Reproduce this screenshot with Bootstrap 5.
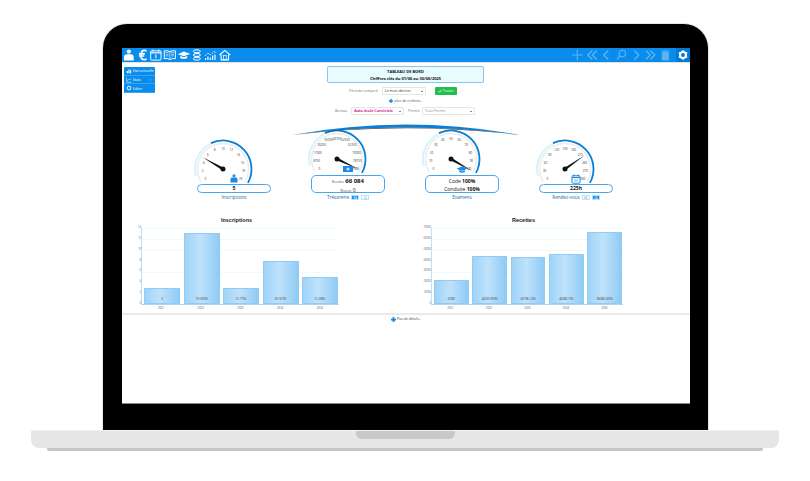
<!DOCTYPE html>
<html lang="fr">
<head>
<meta charset="UTF-8" />
<meta name="viewport" content="width=device-width, initial-scale=1" />
<title>Tableau de bord</title>
<link href="https://cdn.jsdelivr.net/npm/bootstrap@5.3.0/dist/css/bootstrap.min.css" rel="stylesheet" />
<style>
body { background: #fff; font-family: "Open Sans", "Liberation Sans", sans-serif; overflow: hidden; }
.laptop { width: 810px; height: 481px; padding-top: 24px; }
.bezel { width: 605px; height: 406px; margin-left: 103px; background: #000; border-radius: 24px 24px 0 0; padding: 24px 18px 26px 19px; box-shadow: 0 0 0 1px #e6e6e6; }
.screen { height: 356px; background: #fff; position: relative; border-bottom: 1px solid #888; }
.base { width: 748px; height: 18px; margin-left: 31px; background: #e6e6e6; border-top: 1px solid #f4f4f4; border-radius: 0 0 8px 8px; }
.notch { width: 99px; height: 8px; background: #c8c8c8; border-radius: 0 0 6px 6px; }
.foot { width: 716px; height: 3px; margin-left: 47px; background: #c6c6c6; border-radius: 0 0 2px 2px; }
.topbar { height: 14px; background: #0a8ced; box-shadow: 0 1px 0 #eadfd5; }
.topbar svg { display: block; width: 13.7px; height: 12px; }
.tools svg { width: 14.6px; }
.tool-gear { width: 14px; height: 14px; background: #0579d2; margin-left: 3.7px; }
.side-menu { position: absolute; left: 2px; top: 19px; width: 31px; background: #0a8ced; border-radius: 1px; }
.side-menu div { height: 8.7px; font-size: 3.4px; color: #fff; padding-left: 2px; border-bottom: .5px solid #3aa3f0; gap: 1px; }
.side-menu svg { width: 6px; height: 6px; }
.title-box { width: 157px; height: 17px; margin: 4px 0 0 205px; background: #e8fbff; border: 1px solid #8cc4ec; border-radius: 2px; font-size: 4px; font-weight: 700; line-height: 7px; color: #111; padding-top: 1px; }
.filters { font-size: 3.6px; color: #777; height: 8px; }
.fake-select { height: 8.500px; border: .5px solid #e6e6e6; border-radius: 1px; padding: 0 2px; color: #333; background: #fff; }
.fake-select i { width: 0; height: 0; border-left: 1px solid transparent; border-right: 1px solid transparent; border-top: 1.5px solid #111; }
.btn-find { height: 8px; width: 22px; background: #1fbf4b; color: #fff; font-size: 3px; border-radius: 1px; margin-left: 9px; gap: 1px; }
.more { font-size: 3.6px; color: #555; height: 8px; margin: 2px 0; gap: 1px; }
.swoosh { position: absolute; left: 169px; top: 74px; width: 230px; height: 14px; }
.gauges { height: 76px; margin-top: 11px; width: 456px; margin-left: 75px; }
.gauge { width: 114px; }
.gauge svg { display: block; width: 74px; height: 50px; overflow: visible; }
.gauge svg text { font-size: 3px; fill: #333; text-anchor: middle; font-family: "Open Sans", sans-serif; }
.gauge-box { width: 74px; border: 1px solid #4aa6ee; border-radius: 5px; background: #fff; font-size: 5px; text-align: center; color: #111; position: relative; }
.gauge-box.small { height: 9px; line-height: 7px; font-weight: 700; border-radius: 4.500px; }
.gauge-box.big { height: 18px; line-height: 8px; padding-top: .5px; }
.gauge-box small { font-size: 3px; color: #444; }
.gauge-box .amount { font-size: 6px; }
.gauge-label { font-size: 4.600px; color: #1a5fa0; height: 9px; line-height: 7px; gap: 2px; width: 74px; }
.toggle { font-size: 2.600px; line-height: 4px; height: 5px; width: 8px; text-align: center; border: .5px solid #bfe0fa; color: #7ab; }
.toggle.on { background: #0a8ced; color: #fff; }
.charts { margin-top: 17px; height: 96px; }
.chart { position: absolute; top: 0; }
.chart-title { font-size: 5.500px; font-weight: 700; font-family: "Liberation Sans", sans-serif; text-align: center; color: #222; height: 11px; margin-top: -2px; line-height: 6px; padding-left: 12px; }
.plot { height: 77px; border-left: 1px solid #bfe0fa; border-bottom: 1px solid #a9d6f7; margin-left: 19px; padding: 0 1px 0 2px; gap: 3.5px; background: repeating-linear-gradient(to bottom, #eefbfb 0, #eefbfb .5px, transparent .5px, transparent 11px); position: relative; }
.bar { flex: 1; border: 1px solid #8fcbf5; background: linear-gradient(to right, #9fd3f8, #bfe2fa 45%, #8fcbf5); font-size: 2.800px; color: #333; text-align: center; padding-bottom: 2px; }
.ticks { position: absolute; left: -19px; top: -2px; bottom: -2px; width: 18px; font-size: 2.600px; color: #666; text-align: right; }
.years { margin-left: 19px; padding: 1px 1px 0 2px; gap: 3.5px; font-size: 2.800px; color: #555; }
.years span { flex: 1; text-align: center; }
.sep { height: 2px; background: #e9e9e9; position: absolute; left: 0; right: 0; top: 265px; }
.details { position: absolute; left: 0; right: 0; top: 269px; font-size: 3.300px; color: #444; gap: 1px; }
</style>
</head>
<body>
<div class="laptop">
  <div class="bezel">
    <div class="screen">
      <div class="topbar d-flex align-items-center">
        <svg viewBox="0 0 14 12"><circle cx="7" cy="2.5" r="2.2" fill="#fff"/><path d="M2 11.500V8.500q0-3 2.800-3.200h4.400q2.800.2 2.800 3.200v3z" fill="#fff"/></svg>
        <svg viewBox="0 0 14 12"><path d="M10.800 2.200Q9.800 1.200 8.500 1.200 5.500 1.200 5 6t3.500 4.800q1.300 0 2.300-1M3 4.900h6M3 7h5.400" fill="none" stroke="#fff" stroke-width="1.700"/></svg>
        <svg viewBox="0 0 14 12"><rect x="1.700" y="1.800" width="10.600" height="9.400" rx=".8" fill="none" stroke="#fff"/><path d="M1.700 3.800h10.600" stroke="#fff" stroke-width="1.200"/><path d="M4 .5v2M10 .5v2" stroke="#fff"/><path d="M7 5.400v4" stroke="#fff"/></svg>
        <svg viewBox="0 0 14 12"><path d="M7 2.600Q4.500 1 1.300 1.800v8Q4.500 9 7 10.600 9.500 9 12.700 9.800v-8Q9.500 1 7 2.600z" fill="none" stroke="#fff"/><path d="M7 2.600v8M2.700 3.500h3M2.700 5.200h3M2.700 6.900h3M8.300 3.500h3M8.300 5.200h3M8.300 6.900h3" stroke="#fff" stroke-width=".6"/></svg>
        <svg viewBox="0 0 14 12"><path d="M7 2.500 13.500 4.800 7 7.300.8 5.200z" fill="#fff"/><path d="M3.300 7v2Q7 10.800 10.500 9V7L7 8.300z" fill="#fff"/></svg>
        <svg viewBox="0 0 14 12"><ellipse cx="7" cy="2.200" rx="3.600" ry="1.500" fill="none" stroke="#fff"/><ellipse cx="7" cy="6" rx="3.600" ry="1.500" fill="none" stroke="#fff"/><ellipse cx="7" cy="9.800" rx="3.600" ry="1.500" fill="none" stroke="#fff"/><path d="M4.500 4.100h5M4.500 7.900h5" stroke="#fff"/></svg>
        <svg viewBox="0 0 14 12"><path d="M1 11V9h1.200v2zM3.400 11V7.500h1.200V11zM5.800 11V8.500H7V11zM8.200 11V6.500h1.200V11zM10.600 11V5.500h1.200V11z" fill="#fff"/><path d="M1 7 4 4l2.500 2L10 2.500l2.500 1" fill="none" stroke="#fff" stroke-width=".8" stroke-dasharray="1.500 .5"/></svg>
        <svg viewBox="0 0 14 12"><path d="M1.500 6 7 1.300 12.500 6M3.200 5.500V11h7.600V5.500" fill="none" stroke="#fff" stroke-width="1.100"/><rect x="5.600" y="6.500" width="2.800" height="4.500" fill="none" stroke="#fff" stroke-width=".7"/></svg>
        <div class="tools ms-auto d-flex align-items-center">
          <svg viewBox="0 0 14 12"><path d="M7 .5v11M1.500 6h11" stroke="#5db4f3" stroke-width="1.100"/></svg>
          <svg viewBox="0 0 14 12"><path d="M7 1.500 2.500 6 7 10.500M11.500 1.500 7 6l4.500 4.500" fill="none" stroke="#5db4f3" stroke-width="1.300"/></svg>
          <svg viewBox="0 0 14 12"><path d="M9 1.500 4.500 6 9 10.500" fill="none" stroke="#5db4f3" stroke-width="1.300"/></svg>
          <svg viewBox="0 0 14 12"><circle cx="8" cy="4.500" r="3.200" fill="none" stroke="#5db4f3" stroke-width="1.100"/><path d="M5.700 6.800 2.800 10.500" stroke="#5db4f3" stroke-width="1.300"/></svg>
          <svg viewBox="0 0 14 12"><path d="M5 1.500 9.500 6 5 10.500" fill="none" stroke="#5db4f3" stroke-width="1.300"/></svg>
          <svg viewBox="0 0 14 12"><path d="M2.500 1.500 7 6l-4.500 4.500M7 1.500 11.500 6 7 10.500" fill="none" stroke="#5db4f3" stroke-width="1.300"/></svg>
          <svg viewBox="0 0 14 12"><path d="M3.800 3h6.400v8H3.800zM3 2h8M5.500 1.200h3" fill="#5db4f3" stroke="#5db4f3" stroke-width=".7"/></svg>
          <div class="tool-gear d-flex align-items-center justify-content-center">
            <svg viewBox="0 0 14 12"><circle cx="7" cy="6" r="3" fill="none" stroke="#fff" stroke-width="2"/><path d="M7 1v2M7 9v2M2.700 3.500l1.700 1M9.600 7.500l1.700 1M2.700 8.500l1.700-1M9.600 4.500l1.700-1" stroke="#fff" stroke-width="1.300"/></svg>
          </div>
        </div>
      </div>

      <div class="side-menu">
        <div class="d-flex align-items-center"><svg viewBox="0 0 8 8"><path d="M1 7V4h1.500v3zM3.200 7V2h1.500v5zM5.400 7V3h1.500v4z" fill="#fff"/></svg>Etat annuelle</div>
        <div class="d-flex align-items-center"><svg viewBox="0 0 8 8"><path d="M1 1v6h6M2 5l2-2 1 1 2-2" fill="none" stroke="#fff" stroke-width=".7"/></svg>Stats<span class="ms-auto me-1">›</span></div>
        <div class="d-flex align-items-center"><svg viewBox="0 0 8 8"><circle cx="4" cy="4" r="2.500" fill="none" stroke="#fff" stroke-width="1.200"/></svg>Editer</div>
      </div>

      <div class="title-box text-center">TABLEAU DE BORD<br>Chiffres clés du 01/06 au 30/06/2025</div>

      <div class="filters d-flex align-items-center mt-1" style="padding-left:227px">
        <span class="me-1">Période comparé</span>
        <span class="fake-select d-flex align-items-center justify-content-between" style="width:44px">Le mois dernier<i></i></span>
        <span class="btn-find d-flex align-items-center justify-content-center"><svg width="4" height="4" viewBox="0 0 4 4"><path d="M.5 2 1.600 3.200 3.600 .8" fill="none" stroke="#fff" stroke-width=".8"/></svg>Trouver</span>
      </div>
      <div class="more d-flex align-items-center justify-content-center">
        <svg width="4" height="4" viewBox="0 0 4 4"><path d="M2 0v4M0 2h4" stroke="#0a8ced" stroke-width="1.400"/></svg>plus de critères...
      </div>
      <div class="filters d-flex align-items-center" style="padding-left:213px">
        <span class="me-1">Bureau</span>
        <span class="fake-select d-flex align-items-center justify-content-between fw-bold" style="width:53px;color:#e6138c">Auto-école Conviviale<i></i></span>
        <span class="ms-1" style="margin-right:2px">Permis</span>
        <span class="fake-select d-flex align-items-center justify-content-between" style="width:53px;color:#888">Tous Permis<i></i></span>
      </div>

      <svg class="swoosh" viewBox="0 0 230 14"><path d="M1 13Q115-8 229 13 115-2 1 13z" fill="#0a7fd8"/><path d="M1 13Q115-2 229 13 115-.6 1 13z" fill="#444"/></svg>

      <div class="gauges d-flex align-items-end" id="gauges"></div>

      <div class="charts position-relative" id="charts"></div>
      <div class="sep"></div>
      <div class="details d-flex align-items-center justify-content-center">
        <svg width="5" height="5" viewBox="0 0 4 4"><path d="M2 0v4M0 2h4" stroke="#0a8ced" stroke-width="1.400"/></svg>Plus de détails...
      </div>
    </div>
  </div>
  <div class="base d-flex justify-content-center"><div class="notch"></div></div>
  <div class="foot"></div>
</div>

<script type="text/javascript">
  // small blue pictures that sit on the dials
  const icons = {
    person: '<circle cx="0" cy="-3.300" r="1.500" fill="#1e88e5"/><path d="M-3.500 3.500V0q0-1.500 1.500-1.500h4q1.500 0 1.500 1.500v3.500z" fill="#1e88e5"/>',
    note: '<rect x="-5" y="-3" width="10" height="6" fill="#1e88e5"/><circle r="1.600" fill="#bfe2fa"/>',
    cap: '<path d="M0-2.500 5.500-.3 0 2-5.500-.3z" fill="#1e88e5"/><path d="M-3 1.300v1.800Q0 4.500 3 3.100V1.300L0 2.600z" fill="#1e88e5"/>',
    cal: '<rect x="-4" y="-3.300" width="8" height="7.500" rx=".8" fill="#fff" stroke="#1e88e5"/><path d="M-4-1.500h8" stroke="#1e88e5" stroke-width="1.200"/><path d="M-2.200-4.500v2M2.200-4.500v2" stroke="#1e88e5"/><path d="M-1 .2v2.500M1 .2v2.500" stroke="#1e88e5" stroke-width=".7"/>',
  };

  // gauges: ratio 0..1 on the dial, labels around it, then what goes in the box under it
  const gauges = [
    { labels: ['0','2','4','6','8','10','12','14','16','18','20'], ratio: .25, icon: 'person', box: '<div class="gauge-box small">5</div>', label: 'Inscriptions' },
    { labels: ['0','8750','17500','26250','35000','43750','52500','61250','70000','78750','87500'], ratio: .98, raised: true, icon: 'note', box: '<div class="gauge-box big"><small>Recettes</small> <b class="amount">66 084</b><br><small>Réservé</small> 0</div>', label: 'Trésorerie <span class="toggle on">HA</span><span class="toggle">CA</span>' },
    { labels: ['0','10','20','30','40','50','60','70','80','90','100'], ratio: 1, raised: true, icon: 'cap', box: '<div class="gauge-box big">Code <b>100%</b><br>Conduite <b>100%</b></div>', label: 'Examens' },
    { labels: ['0','30','60','90','120','150','180','210','240','270','300'], ratio: .73, icon: 'cal', box: '<div class="gauge-box small">225h</div>', label: 'Rendez-vous <span class="toggle">HA</span><span class="toggle on">CA</span>' },
  ];

  function polar(cx, cy, r, deg) {
    const a = deg * Math.PI / 180;
    return [cx + r * Math.cos(a), cy + r * Math.sin(a)];
  }
  function arc(cx, cy, r, from, to) {
    const p = polar(cx, cy, r, from), q = polar(cx, cy, r, to);
    return `M${p[0]} ${p[1]}A${r} ${r} 0 ${to - from > 180 ? 1 : 0} 1 ${q[0]} ${q[1]}`;
  }

  document.getElementById('gauges').innerHTML = gauges.map(g => {
    const cx = 26, cy = g.raised ? 34 : 35;
    const start = 150, sweep = 240;
    const deg = start + sweep * g.ratio;
    const tip = polar(cx, cy, 24, deg), s1 = polar(cx, cy, 1.300, deg + 90), s2 = polar(cx, cy, 1.300, deg - 90);
    const labels = g.labels.map((t, i) => {
      const p = polar(cx, cy, 20.500, start + 24 * i);
      return `<text x="${p[0]}" y="${p[1] + 1}">${t}</text>`;
    }).join('');
    return `<div class="gauge">
      <svg viewBox="0 0 74 50">
        <path d="${arc(cx, cy, 28, 165, 245)}" fill="none" stroke="#d3f4fc" stroke-width="2"/>
        <path d="${arc(cx, cy, 28.500, 245, 389)}" fill="none" stroke="#0a7fd8" stroke-width="1.800"/>
        <path d="${arc(cx, cy, 25.500, 150, 390)}" fill="none" stroke="#ececec" stroke-width="1.500"/>
        ${labels}
        <polygon points="${s1} ${tip} ${s2}" fill="#111"/>
        <circle cx="${cx}" cy="${cy}" r="2.500" fill="#111"/>
        <g transform="translate(${cx + 11} ${cy + 10})">${icons[g.icon]}</g>
      </svg>
      ${g.box}
      <div class="gauge-label d-flex justify-content-center align-items-center">${g.label}</div>
    </div>`;
  }).join('');

  // bar charts
  const charts = [
    { title: 'Inscriptions', left: 0, width: 217, max: 14, ticks: [14,12,10,8,6,4,2,0],
      data: [[3,'3'],[13,'13 (333%)'],[3,'3 (-77%)'],[8,'8 (167%)'],[5,'5 (-38%)']] },
    { title: 'Recettes', left: 290, width: 211, max: 70000, ticks: [70000,60000,50000,40000,30000,20000,10000,0],
      data: [[22081,'22081'],[44230,'44230 (95%)'],[43108,'43108 (-3%)'],[46286,'46286 (7%)'],[66086,'66086 (43%)']] },
  ];
  document.getElementById('charts').innerHTML = charts.map(c => {
    const bars = c.data.map(d => `<div class="bar d-flex align-items-end justify-content-center" style="height:${d[0] / c.max * 100}%">${d[1]}</div>`).join('');
    const ticks = c.ticks.map(t => `<span>${t}</span>`).join('');
    return `<div class="chart" style="left:${c.left}px;width:${c.width}px">
      <div class="chart-title">${c.title}</div>
      <div class="plot d-flex align-items-end">
        <div class="ticks d-flex flex-column justify-content-between">${ticks}</div>${bars}
      </div>
      <div class="years d-flex"><span>2021</span><span>2022</span><span>2023</span><span>2024</span><span>2025</span></div>
    </div>`;
  }).join('');
</script>
<script src="https://cdn.jsdelivr.net/npm/bootstrap@5.3.0/dist/js/bootstrap.bundle.min.js"></script>
</body>
</html>
